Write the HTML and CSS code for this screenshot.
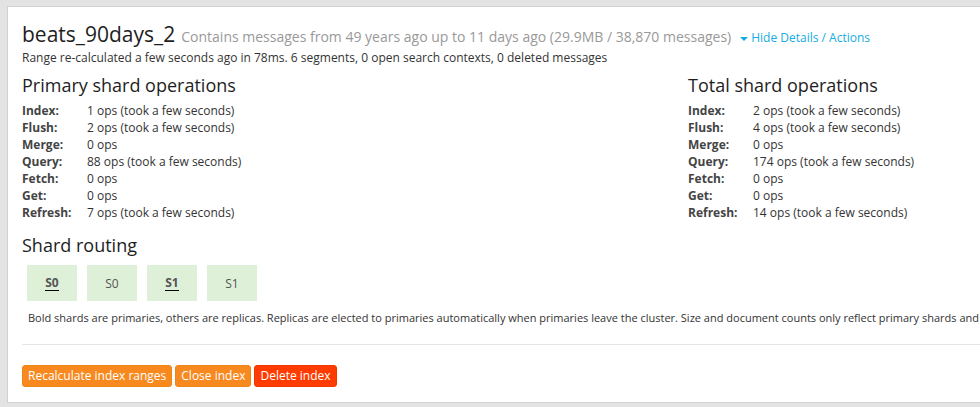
FILE: index.html
```html
<!DOCTYPE html>
<html>
<head>
<meta charset="utf-8">
<link rel="stylesheet" href="styles.css">
</head>
<body>
<div class="panel">
  <div class="title-row">
    <h2 class="index-name">beats_90days_2</h2>
    <span class="index-meta">Contains messages from 49 years ago up to 11 days ago (29.9MB / 38,870 messages)</span>
    <a class="toggle"><span class="caret"></span>Hide Details / Actions</a>
  </div>
  <p class="range-info">Range re-calculated a few seconds ago in 78ms. 6 segments, 0 open search contexts, 0 deleted messages</p>

  <div class="ops-grid">
    <div class="ops">
      <h3>Primary shard operations</h3>
      <dl class="ops-list">
        <dt>Index:</dt><dd>1 ops (took a few seconds)</dd>
        <dt>Flush:</dt><dd>2 ops (took a few seconds)</dd>
        <dt>Merge:</dt><dd>0 ops</dd>
        <dt>Query:</dt><dd>88 ops (took a few seconds)</dd>
        <dt>Fetch:</dt><dd>0 ops</dd>
        <dt>Get:</dt><dd>0 ops</dd>
        <dt>Refresh:</dt><dd>7 ops (took a few seconds)</dd>
      </dl>
    </div>
    <div class="ops">
      <h3>Total shard operations</h3>
      <dl class="ops-list">
        <dt>Index:</dt><dd>2 ops (took a few seconds)</dd>
        <dt>Flush:</dt><dd>4 ops (took a few seconds)</dd>
        <dt>Merge:</dt><dd>0 ops</dd>
        <dt>Query:</dt><dd>174 ops (took a few seconds)</dd>
        <dt>Fetch:</dt><dd>0 ops</dd>
        <dt>Get:</dt><dd>0 ops</dd>
        <dt>Refresh:</dt><dd>14 ops (took a few seconds)</dd>
      </dl>
    </div>
  </div>

  <h3 class="routing-title">Shard routing</h3>
  <ul class="shards">
    <li class="shard primary"><span>S0</span></li>
    <li class="shard"><span>S0</span></li>
    <li class="shard primary"><span>S1</span></li>
    <li class="shard"><span>S1</span></li>
  </ul>
  <p class="shard-note">Bold shards are primaries, others are replicas. Replicas are elected to primaries automatically when primaries leave the cluster. Size and document counts only reflect primary shards and no possible replica duplication.</p>

  <hr class="divider">

  <div class="actions">
    <button class="btn btn-warning">Recalculate index ranges</button>
    <button class="btn btn-warning">Close index</button>
    <button class="btn btn-danger">Delete index</button>
  </div>
</div>
</body>
</html>
```
FILE: styles.css
```css
html, body {
  margin: 0;
  padding: 0;
}
body {
  background: #e3e3e3;
  font-family: "Open Sans", "DejaVu Sans", sans-serif;
  color: #333;
  overflow: hidden;
  width: 980px;
  height: 407px;
}
.panel {
  margin: 6px 0 0 7px;
  width: 1400px;
  background: #fff;
  border: 1px solid #d1d1d1;
  padding: 14px 14px 14px 14px;
  box-sizing: border-box;
  height: 397px;
}
.title-row {
  display: flex;
  align-items: baseline;
  white-space: nowrap;
}
.index-name {
  margin: 0;
  font-size: 21px;
  font-weight: 400;
  line-height: 26px;
  color: #1e1e1e;
}
.index-meta {
  margin-left: 6px;
  font-size: 14px;
  color: #999;
}
.toggle {
  margin-left: 9px;
  font-size: 12px;
  color: #16ace3;
}
.caret {
  display: inline-block;
  width: 0;
  height: 0;
  border-left: 4px solid transparent;
  border-right: 4px solid transparent;
  border-top: 4px solid #16ace3;
  margin-right: 3px;
  vertical-align: middle;
}
.range-info {
  margin: 2px 0 0;
  font-size: 12px;
  line-height: 17px;
}
.ops-grid {
  display: grid;
  grid-template-columns: 666px 666px;
  margin-top: 8px;
}
.ops h3, .routing-title {
  margin: 0;
  font-size: 18px;
  font-weight: 400;
  line-height: 22px;
  color: #1e1e1e;
}
.ops-list {
  margin: 6px 0 0;
  display: grid;
  grid-template-columns: 65px auto;
  font-size: 12px;
  line-height: 17px;
}
.ops-list dt {
  font-weight: 700;
  color: #444;
}
.ops-list dd {
  margin: 0;
}
.routing-title {
  margin-top: 13px;
}
.shards {
  list-style: none;
  margin: 9px 0 0 5px;
  padding: 0;
  display: flex;
  gap: 10px;
}
.shard {
  width: 50px;
  height: 36px;
  background: #dff0d8;
  display: flex;
  align-items: center;
  justify-content: center;
  font-size: 12px;
  color: #555;
}
.shard.primary span {
  font-weight: 700;
  border-bottom: 1px solid #000;
  line-height: 14px;
}
.shard-note {
  margin: 9px 0 0 6px;
  font-size: 11px;
  line-height: 15px;
  white-space: nowrap;
}
.divider {
  margin: 19px 0 0;
  border: 0;
  border-top: 1px solid #e5e5e5;
}
.actions {
  margin-top: 20px;
  display: flex;
  gap: 3px;
}
.btn {
  font-family: inherit;
  font-size: 12px;
  line-height: 18px;
  padding: 1px 5px;
  border-radius: 3px;
  color: #fff;
  border: 1px solid transparent;
}
.btn-warning {
  background: #f7891f;
  border-color: #ef8419;
}
.btn-danger {
  background: #ff3b00;
  border-color: #f23800;
}
```
